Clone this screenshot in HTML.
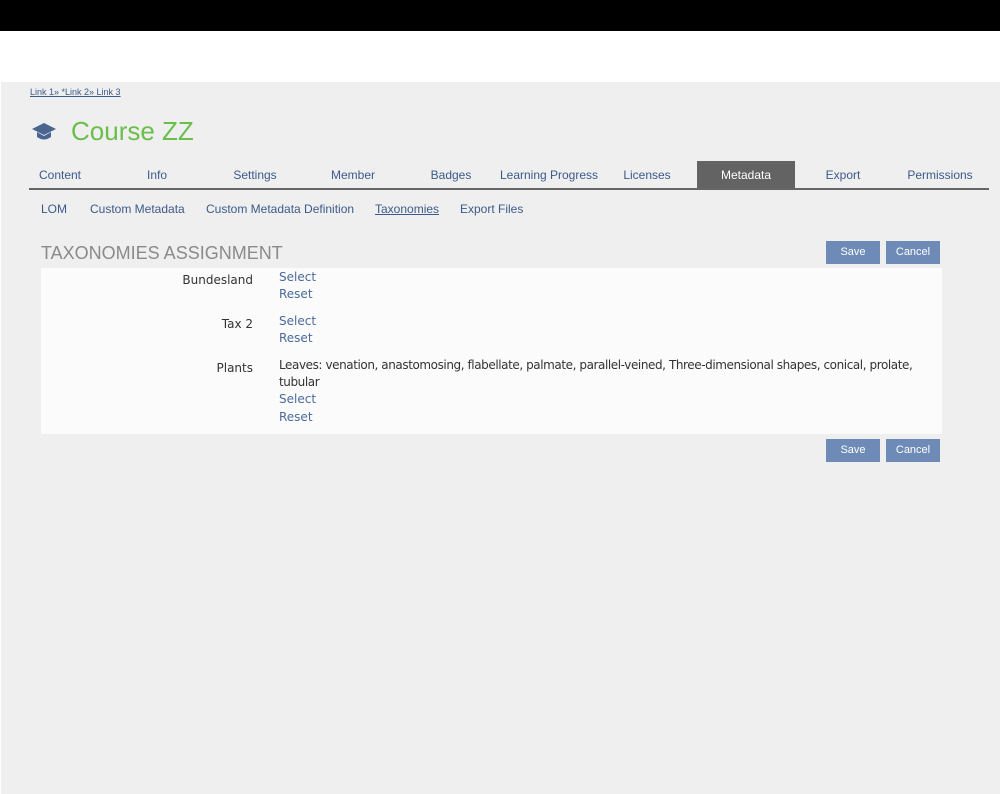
<!DOCTYPE html>
<html><head><style>
body{margin:0;width:1000px;height:794px;background:#fff;font-family:"Liberation Sans",sans-serif;position:relative;overflow:hidden}
.abs{position:absolute}
.top{left:0;top:0;width:1000px;height:31px;background:#000}
.main{left:1px;top:82px;width:999px;height:712px;background:#efefef}
.tab{position:absolute;top:168px;font-size:12px;color:#3b5a8a;text-align:center;width:98px}
.sub{position:absolute;top:202px;font-size:12px;color:#3b5a8a}
.btn{position:absolute;height:23px;background:#6e8bb8;color:#fff;font-size:11px;line-height:23px;text-align:center}
.f{font-family:"DejaVu Sans",sans-serif;font-size:12px}
.lbl{position:absolute;right:747px;color:#333}
.lnk{position:absolute;left:279px;color:#4a6a9a}
</style></head><body>
<div class="abs top"></div>
<div class="abs main"></div>
<div class="abs" style="left:30px;top:87px;font-size:9px;color:#3b5a8a;text-decoration:underline">Link 1» *Link 2» Link 3</div>
<svg class="abs" style="left:31px;top:122px" width="26" height="20" viewBox="0 0 26 20"><path d="M13 1 L25 7 L13 13 L1 7Z" fill="#4a6590"/><path d="M6 10 V15 Q13 20 20 15 V10 L13 14Z" fill="#4a6590"/></svg>
<div class="abs" style="left:71px;top:116px;font-size:26px;color:#6abf4b">Course ZZ</div>
<div class="abs" style="left:697px;top:161px;width:98px;height:27px;background:#636363"></div>
<div class="abs" style="left:29px;top:188px;width:960px;height:2px;background:#666"></div>
<div class="tab" style="left:11px">Content</div>
<div class="tab" style="left:108px">Info</div>
<div class="tab" style="left:206px">Settings</div>
<div class="tab" style="left:304px">Member</div>
<div class="tab" style="left:402px">Badges</div>
<div class="tab" style="left:490px;width:118px">Learning Progress</div>
<div class="tab" style="left:598px">Licenses</div>
<div class="tab" style="left:697px;color:#fff">Metadata</div>
<div class="tab" style="left:794px">Export</div>
<div class="tab" style="left:891px">Permissions</div>
<div class="sub" style="left:41px">LOM</div>
<div class="sub" style="left:90px">Custom Metadata</div>
<div class="sub" style="left:206px">Custom Metadata Definition</div>
<div class="sub" style="left:375px;text-decoration:underline">Taxonomies</div>
<div class="sub" style="left:460px">Export Files</div>
<div class="abs" style="left:41px;top:243px;font-size:18px;color:#8a8a8a">TAXONOMIES ASSIGNMENT</div>
<div class="btn" style="left:826px;top:241px;width:54px">Save</div>
<div class="btn" style="left:886px;top:241px;width:54px">Cancel</div>
<div class="abs" style="left:41px;top:268px;width:901px;height:166px;background:#fbfbfb"></div>
<div class="f">
<div class="lbl" style="top:273px">Bundesland</div>
<div class="lnk" style="top:270px">Select</div>
<div class="lnk" style="top:287px">Reset</div>
<div class="lbl" style="top:317px">Tax 2</div>
<div class="lnk" style="top:314px">Select</div>
<div class="lnk" style="top:331px">Reset</div>
<div class="lbl" style="top:361px">Plants</div>
<div class="lnk" style="top:357px;color:#333;width:650px;line-height:17px;letter-spacing:-0.42px">Leaves: venation, anastomosing, flabellate, palmate, parallel-veined, Three-dimensional shapes, conical, prolate, tubular</div>
<div class="lnk" style="top:392px">Select</div>
<div class="lnk" style="top:410px">Reset</div>
</div>
<div class="btn" style="left:826px;top:439px;width:54px">Save</div>
<div class="btn" style="left:886px;top:439px;width:54px">Cancel</div>
</body></html>
